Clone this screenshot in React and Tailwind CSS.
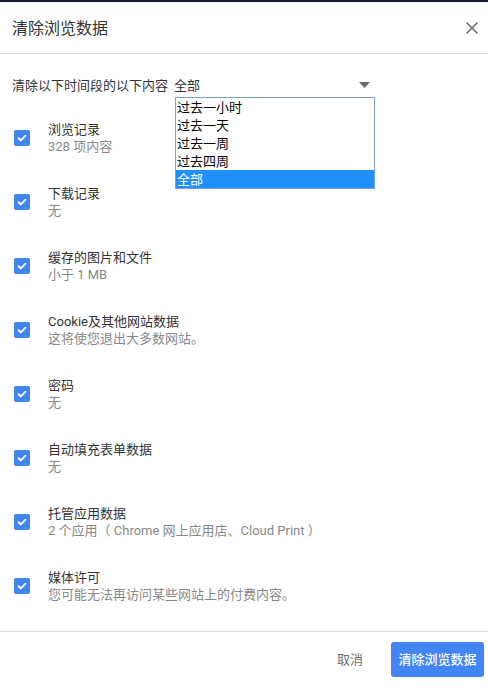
import { useState } from 'react'

const ITEMS = [
  { title: '浏览记录', sub: '328 项内容' },
  { title: '下载记录', sub: '无' },
  { title: '缓存的图片和文件', sub: '小于 1 MB' },
  { title: 'Cookie及其他网站数据', sub: '这将使您退出大多数网站。' },
  { title: '密码', sub: '无' },
  { title: '自动填充表单数据', sub: '无' },
  { title: '托管应用数据', sub: '2 个应用（ Chrome 网上应用店、Cloud Print ）' },
  { title: '媒体许可', sub: '您可能无法再访问某些网站上的付费内容。' },
]

const RANGES = ['过去一小时', '过去一天', '过去一周', '过去四周', '全部']

function Check() {
  return (
    <div className="w-4 h-4 rounded-[2px] bg-[#4285f4] flex items-center justify-center shrink-0">
      <svg width="12" height="12" viewBox="0 0 12 12" fill="none">
        <path d="M2.5 6.2l2.4 2.3 4.6-4.8" stroke="white" strokeWidth="1.8" strokeLinecap="round" strokeLinejoin="round" />
      </svg>
    </div>
  )
}

export default function App() {
  const [checked] = useState(ITEMS.map(() => true))

  return (
    <div className="w-[488px] h-[688px] bg-white flex flex-col font-['Roboto','Noto_Sans_CJK_SC',sans-serif] text-[13px] leading-[17px] overflow-hidden">
      <div className="h-[2px] bg-[#0f1a3c] shrink-0" />
      {/* header */}
      <div className="h-[52px] border-b border-[#dcdcdc] flex items-center justify-between pl-3 pr-[9px] shrink-0">
        <span className="text-[16px] text-[#333] pt-[1px]">清除浏览数据</span>
        <svg width="14" height="14" viewBox="0 0 14 14" className="mt-[1px]">
          <path d="M1.5 1.5l11 11M12.5 1.5l-11 11" stroke="#6b6b6b" strokeWidth="1.5" />
        </svg>
      </div>

      {/* time range */}
      <div className="relative h-[52px] pt-[23px] pl-3 pr-[118px] flex items-start shrink-0">
        <span className="text-[#333]">清除以下时间段的以下内容</span>
        <div className="ml-[6px] flex-1 flex items-center justify-between">
          <span className="text-[#333]">全部</span>
          <svg width="11" height="6" viewBox="0 0 11 6" className="mt-[-2px]">
            <path d="M0 0h11L5.5 6z" fill="#6a6a6a" />
          </svg>
        </div>
        <div className="absolute left-[175px] top-[43px] w-[200px] border border-[#7b9fd4] bg-white z-10 font-['Noto_Sans_CJK_SC',sans-serif]">
          {RANGES.map((r, i) => (
            <div
              key={r}
              className={`h-[18px] leading-[18px] pl-[1px] text-[13px] ${i === RANGES.length - 1 ? 'bg-[#1e90ff] text-white' : 'text-black'}`}
            >
              {r}
            </div>
          ))}
        </div>
      </div>

      {/* items */}
      <div className="flex flex-col">
        {ITEMS.map((it, i) => (
          <div key={it.title} className="h-16 flex items-center pl-[14px]">
            {checked[i] && <Check />}
            <div className="ml-[18px] flex flex-col">
              <span className="text-[#333]">{it.title}</span>
              <span className="text-[#888]">{it.sub}</span>
            </div>
          </div>
        ))}
      </div>

      {/* footer */}
      <div className="mt-[13px] border-t border-[#dcdcdc] flex-1 flex items-start justify-end pt-[10px] pr-1">
        <button className="h-[35px] px-[16px] text-[#6b6b6b] mr-[12px]">取消</button>
        <button className="h-[35px] w-[93px] rounded-[3px] bg-[#4285f4] text-white font-medium">清除浏览数据</button>
      </div>
    </div>
  )
}
